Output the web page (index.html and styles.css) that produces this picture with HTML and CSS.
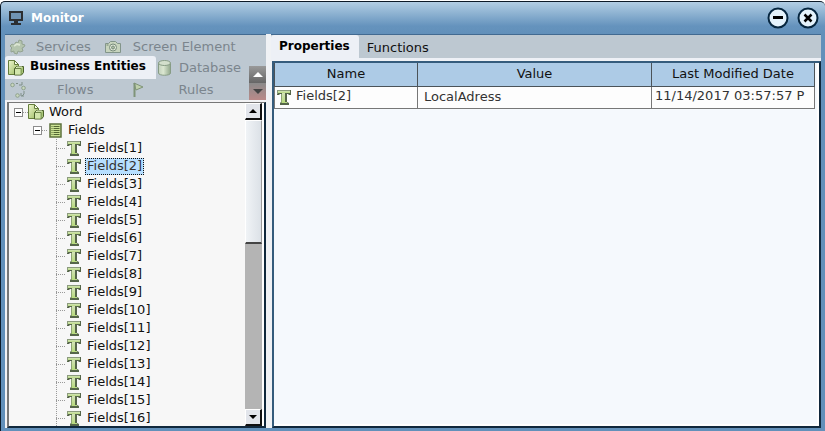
FILE: index.html
```html
<!DOCTYPE html>
<html lang="en">
<head>
<meta charset="utf-8">
<title>Monitor</title>
<link rel="stylesheet" href="styles.css">
</head>
<body>
<svg class="sprite" aria-hidden="true">
  <defs>
    <linearGradient id="green" x1="0" y1="0" x2="1" y2="1"><stop offset="0" stop-color="#f0f8cf"/><stop offset="1" stop-color="#96b85c"/></linearGradient>
    <linearGradient id="stem" x1="0" y1="0" x2="0" y2="1"><stop offset="0" stop-color="#d3e2b8"/><stop offset="1" stop-color="#b9db80"/></linearGradient>
    <linearGradient id="can" x1="0" y1="0" x2="1" y2="0"><stop offset="0" stop-color="#c2d0bc"/><stop offset=".4" stop-color="#dbe7d1"/><stop offset="1" stop-color="#91a78b"/></linearGradient>
  </defs>
  <symbol id="type" viewBox="0 0 16 16">
    <path d="M1 1h14v5h-2l-1-1h-1v8l2 1v2H4v-2l1-1V5H4L3 6H1z" fill="#56664a"/>
    <path d="M1 1h13v1H1zM1 2h1v3H1z" fill="#8b9b7c"/>
    <path d="M2 2h12v2H2z" fill="url(#stem)"/>
    <path d="M6 4h3v9H6z" fill="url(#stem)"/>
    <path d="M5 14h6v-1H6z" fill="#b9db80"/>
    <path d="M5 5h1v8H5z" fill="#8ea475"/>
  </symbol>
  <symbol id="entity" viewBox="0 0 16 16">
    <path d="M.5.5h6l4 4v10H.5z" fill="url(#green)" stroke="#657d3c"/>
    <path d="M6.500.5v4h4z" fill="#fafded" stroke="#657d3c"/>
    <path d="M6.500 8.500l2-2h7v6l-2 2.500h-7z" fill="#a8c678" stroke="#4c612d"/>
    <path d="M7 8.500h6V15" fill="none" stroke="#6c8548"/>
    <path d="M7 9h5.500v5.500H7z" fill="#d2e6ac"/>
    <path d="M8 8l1-1h5" fill="none" stroke="#e3f0c9"/>
  </symbol>
  <symbol id="list" viewBox="0 0 13 15">
    <path d="M1 1h11v13H1z" fill="#cbe294" stroke="#5d713c" stroke-width="1.500"/>
    <path d="M2.500 3.500h1m1 0h6m-8 2h1m1 0h6m-8 2h1m1 0h6m-8 2h1m1 0h6m-8 2h1m1 0h6" stroke="#536734" fill="none"/>
  </symbol>
  <symbol id="gear" viewBox="0 0 16 16">
    <path d="M6 3l2 1 1-3 3 1v3l3 1-1 2-2 1 1 3-3 1-2-1-1 3-3-1v-2l-3 1v-3l1-1-2-2 2-2 2 1z" fill="#b4c4ae" stroke="#93a391"/>
    <path d="M4 7l3-2 3 1" fill="none" stroke="#dbe5d2" stroke-width="2"/>
  </symbol>
  <symbol id="camera" viewBox="0 0 16 14">
    <path d="M.5 3.500h3l2-2h5l2 2h3v9H.5z" fill="#c7d4bd" stroke="#82958a"/>
    <circle cx="8" cy="7.500" r="3.500" fill="#e2ead9" stroke="#778a7b"/><circle cx="8" cy="7.500" r="1.500" fill="#a9bba0" stroke="#778a7b"/>
    <path d="M1.500 5h2" stroke="#718572"/>
  </symbol>
  <symbol id="database" viewBox="0 0 13 16">
    <path d="M.5 3v10c0 3 12 3 12 0V3z" fill="url(#can)" stroke="#879c85"/>
    <ellipse cx="6.500" cy="3" rx="6" ry="2.500" fill="#d3dfcc" stroke="#879c85"/>
  </symbol>
  <symbol id="flow" viewBox="0 0 16 16">
    <g fill="#c9d7bd" stroke="#8ea18e"><circle cx="2.500" cy="3" r="1.800"/><circle cx="13.500" cy="6" r="1.800"/><circle cx="7.500" cy="13.500" r="1.800"/></g>
    <path d="M6 1.500h2M9 3h3V0M14 9v3M14 12l-2 2M11 11v3h3" fill="none" stroke="#7e8f88"/>
  </symbol>
  <symbol id="flag" viewBox="0 0 11 15">
    <path d="M1 1l9 4-7 3z" fill="#bfd0ac" stroke="#7f9478"/><path d="M1.500 1v14" stroke="#7f9478" stroke-width="2"/>
  </symbol>
</svg>

<main class="window">
  <header class="titlebar">
    <svg class="monitor-icon" viewBox="0 0 14 14" aria-hidden="true"><path d="M1 1h12v8H1z" fill="#6f93b3" stroke="#2b2e32" stroke-width="2"/><path d="M1 8h12v2H9v2h3v2H2v-2h3v-2H1z" fill="#2b2e32"/></svg>
    <h1 class="title">Monitor</h1>
    <button class="round" aria-label="Minimize"><svg viewBox="0 0 22 22"><circle cx="11" cy="11" r="9.500"/><path d="M6 10.500h10" stroke-width="3"/></svg></button>
    <button class="round" aria-label="Close"><svg viewBox="0 0 22 22"><circle cx="11" cy="11" r="9.500"/><path d="M7.500 7.500l7 7m0-7l-7 7" stroke-width="2.500"/></svg></button>
  </header>

  <div class="body">
    <section class="side">
      <div class="side-tabs">
        <nav class="tab-rows">
          <div class="tab-row">
            <button class="tab"><svg class="i16"><use href="#gear"/></svg><span>Services</span></button>
            <button class="tab camera"><svg class="i16"><use href="#camera"/></svg><span>Screen Element</span></button>
          </div>
          <div class="tab-row">
            <button class="tab active"><svg class="i16"><use href="#entity"/></svg><span>Business Entities</span></button>
            <button class="tab database"><svg class="i13"><use href="#database"/></svg><span>Database</span></button>
          </div>
          <div class="tab-row">
            <button class="tab flows"><svg class="i16"><use href="#flow"/></svg><span>Flows</span></button>
            <button class="tab rules"><svg class="i11"><use href="#flag"/></svg><span>Rules</span></button>
          </div>
        </nav>
        <div class="spinner">
          <button class="spin up" aria-label="Previous tabs"><svg viewBox="0 0 10 5"><path d="M5 0l5 5H0z"/></svg></button>
          <button class="spin down" aria-label="Next tabs"><svg viewBox="0 0 10 5"><path d="M0 0h10L5 5z"/></svg></button>
        </div>
      </div>

      <div class="tree-box">
        <ul class="tree">
          <li class="node"><button class="toggle" aria-label="Collapse Word"></button><i class="dots"></i><svg class="i16"><use href="#entity"/></svg><span class="label">Word</span></li>
          <li class="node level2"><button class="toggle" aria-label="Collapse Fields"></button><i class="dots"></i><svg class="list-icon"><use href="#list"/></svg><span class="label">Fields</span></li>
          <li class="node leaf"><svg class="i16"><use href="#type"/></svg><span class="label">Fields[1]</span></li>
          <li class="node leaf"><svg class="i16"><use href="#type"/></svg><span class="label selected">Fields[2]</span></li>
          <li class="node leaf"><svg class="i16"><use href="#type"/></svg><span class="label">Fields[3]</span></li>
          <li class="node leaf"><svg class="i16"><use href="#type"/></svg><span class="label">Fields[4]</span></li>
          <li class="node leaf"><svg class="i16"><use href="#type"/></svg><span class="label">Fields[5]</span></li>
          <li class="node leaf"><svg class="i16"><use href="#type"/></svg><span class="label">Fields[6]</span></li>
          <li class="node leaf"><svg class="i16"><use href="#type"/></svg><span class="label">Fields[7]</span></li>
          <li class="node leaf"><svg class="i16"><use href="#type"/></svg><span class="label">Fields[8]</span></li>
          <li class="node leaf"><svg class="i16"><use href="#type"/></svg><span class="label">Fields[9]</span></li>
          <li class="node leaf"><svg class="i16"><use href="#type"/></svg><span class="label">Fields[10]</span></li>
          <li class="node leaf"><svg class="i16"><use href="#type"/></svg><span class="label">Fields[11]</span></li>
          <li class="node leaf"><svg class="i16"><use href="#type"/></svg><span class="label">Fields[12]</span></li>
          <li class="node leaf"><svg class="i16"><use href="#type"/></svg><span class="label">Fields[13]</span></li>
          <li class="node leaf"><svg class="i16"><use href="#type"/></svg><span class="label">Fields[14]</span></li>
          <li class="node leaf"><svg class="i16"><use href="#type"/></svg><span class="label">Fields[15]</span></li>
          <li class="node leaf"><svg class="i16"><use href="#type"/></svg><span class="label">Fields[16]</span></li>
        </ul>
        <div class="scrollbar">
          <button class="scroll-btn" aria-label="Scroll up"><svg viewBox="0 0 8 4"><path d="M4 0l4 4H0z"/></svg></button>
          <div class="track"><div class="thumb"></div></div>
          <button class="scroll-btn" aria-label="Scroll down"><svg viewBox="0 0 8 4"><path d="M0 0h8L4 4z"/></svg></button>
        </div>
      </div>
    </section>

    <section class="detail">
      <nav class="detail-tabs">
        <button class="dtab current">Properties</button>
        <button class="dtab">Functions</button>
      </nav>
      <div class="grid-box">
        <table class="grid">
          <colgroup><col class="c-name"><col class="c-value"><col class="c-date"></colgroup>
          <thead><tr><th>Name</th><th>Value</th><th>Last Modified Date</th></tr></thead>
          <tbody><tr><td class="name"><div class="cell"><svg class="i16"><use href="#type"/></svg><span>Fields[2]</span></div></td><td>LocalAdress</td><td class="date">11/14/2017 03:57:57 P</td></tr></tbody>
        </table>
      </div>
    </section>
  </div>
</main>
</body>
</html>
```
FILE: styles.css
```css
* { box-sizing: border-box; }

body {
  margin: 0;
  background: #fff;
  color: #111;
  font: 13px/18px "DejaVu Sans", Verdana, sans-serif;
}

button {
  margin: 0;
  padding: 0;
  border: 0;
  background: none;
  color: inherit;
  font: inherit;
}

svg { display: block; flex: none; }
.sprite { position: absolute; width: 0; height: 0; }
.i16 { width: 16px; height: 16px; }
.i13 { width: 13px; height: 16px; }
.i11 { width: 11px; height: 15px; }

.window {
  display: flex;
  flex-direction: column;
  height: 100vh;
  padding: 1px 0 0;
}

.titlebar {
  display: flex;
  flex: none;
  align-items: center;
  gap: 8px;
  height: 33px;
  padding: 0 6px 0 8px;
  border: solid #0c1a28;
  border-width: 1px 0 0 1px;
  border-radius: 5px 5px 0 0;
  background: linear-gradient(#b2cee4, #6593bd 75%, #6290ba);
}

.monitor-icon { width: 14px; height: 14px; }

.title {
  flex: 1;
  margin: 0;
  color: #fff;
  font-size: 12px;
  line-height: 18px;
}

.round { width: 22px; height: 22px; }
.round svg { width: 22px; height: 22px; }
.round circle { fill: #e5f3fc; stroke: #06263f; stroke-width: 2; }
.round path { stroke: #000; }

.body {
  display: flex;
  flex: 1;
  min-height: 0;
  padding: 0 4px 3px;
  border-left: 1px solid #0c1a28;
  background: #6290ba;
}

.side {
  display: flex;
  flex: none;
  flex-direction: column;
  width: 261px;
  background: #f3f3f5;
}

.side-tabs {
  display: flex;
  flex: none;
  align-items: flex-end;
  border-top: 1px solid #426a91;
  background: #bdc8d1;
}

.tab-rows { flex: 1; }
.tab-row { display: flex; height: 21px; align-items: center; }
.tab-row:nth-child(1) { padding-top: 3px; }
.tab-row:nth-child(2) { height: 23px; }

.tab {
  display: flex;
  align-items: center;
  height: 100%;
  padding-left: 5px;
  gap: 10px;
  color: #7b858d;
  white-space: nowrap;
}

.tab.camera { padding-left: 14px; gap: 12px; }
.tab.database { padding-left: 2px; gap: 8px; }
.tab.flows { gap: 31px; }
.tab.rules { padding-left: 40px; gap: 34px; }

.tab.active {
  width: 151px;
  padding-left: 3px;
  gap: 6px;
  border-radius: 3px 3px 0 0;
  background: #edf0f6;
  color: #000;
  font-size: 12px;
  font-weight: bold;
}

.tab.active span { padding-bottom: 3px; }

.spinner { display: flex; flex-direction: column; width: 17px; }
.spin { display: grid; place-items: center; height: 17px; }
.spin svg { width: 10px; height: 5px; }
.up { background: linear-gradient(#999, #666); fill: #fff; }
.down { background: linear-gradient(#8a8a8a, #ba8a89); fill: #444; }

.tree-box {
  display: flex;
  flex: 1;
  min-height: 0;
  margin: 2px 0 0 2px;
  border-style: solid;
  border-width: 1px 2px 2px;
  border-color: #777 #10283c #10283c #777;
  background: #f7f7f7;
}

.tree {
  flex: 1;
  margin: 0;
  padding: 0;
  overflow: hidden;
  list-style: none;
}

.node { display: flex; align-items: center; height: 18px; padding-left: 5px; }
.level2 { padding-left: 24px; }
.leaf { padding-left: 57px; }

.toggle {
  display: grid;
  place-items: center;
  width: 9px;
  height: 9px;
  border: 1px solid #8c8c8c;
  background: #fff;
}

.toggle::before { content: ""; width: 5px; height: 1px; background: #000; }
.dots { width: 5px; border-top: 1px dotted #999; }
.list-icon { width: 13px; height: 15px; margin: 0 1px 0 2px; }

.leaf {
  background:
    repeating-linear-gradient(#999 0 1px, transparent 1px 2px) 47px 0 / 1px 100% no-repeat,
    repeating-linear-gradient(90deg, #999 0 1px, transparent 1px 2px) 47px 9px / 10px 1px no-repeat;
}

.label { height: 17px; margin-left: 3px; padding: 0 1px; border: 1px solid transparent; line-height: 14px; }
.selected { border: 1px dotted #111; background: #b7dfff; color: #333; }

.scrollbar { display: flex; flex: none; flex-direction: column; width: 19px; border-right: 2px solid #fff; background: #b4b4b4; }

.scroll-btn {
  display: grid;
  flex: none;
  place-items: center;
  height: 17px;
  border: solid;
  border-width: 1px 2px 2px 1px;
  border-color: #fff #111 #111 #fff;
  background: #e2e5eb;
}

.scroll-btn svg { width: 8px; height: 4px; }
.track { flex: 1; }
.thumb { height: 43%; border: solid; border-width: 1px 1px 2px; border-color: #fff #999 #444 #fff; background: linear-gradient(90deg, #f0f3f6, #dce1e7); }

.detail {
  display: flex;
  flex: 1;
  flex-direction: column;
  min-width: 0;
  padding-left: 5px;
  background: #f0f2f5;
}

.detail-tabs {
  display: flex;
  flex: none;
  height: 26px;
  border-top: 1px solid #426a91;
  border-bottom: 2px solid #edf0f6;
  background: #bdc8d1;
}

.dtab { padding: 3px 8px 0; }

.current {
  margin-bottom: -2px;
  padding: 0 9px 4px 8px;
  border-radius: 3px 3px 0 0;
  background: #edf0f6;
  color: #000;
  font-size: 12px;
  font-weight: bold;
}

.grid-box {
  flex: 1;
  margin: 1px 0 0 1px;
  padding: 0 4px 0 0;
  border-style: solid;
  border-width: 2px;
  border-color: #355c7c #10283c #10283c #355c7c;
  background: #f5f9fd;
  box-shadow: inset -2px -2px #fff;
}

.grid { width: 100%; border-collapse: collapse; table-layout: fixed; }
.c-name { width: 143px; }
.c-date { width: 163px; }

th {
  height: 23px;
  padding: 0;
  border: solid #4b5358;
  border-width: 0 1px 1px;
  background: #adcbe6;
  font-weight: normal;
}

td {
  height: 22px;
  padding: 0 6px;
  border: solid #777;
  border-width: 0 1px 1px;
  background: #fdfdfd;
  color: #333;
  white-space: nowrap;
}

td.name { padding: 0 1px; }
td.date { padding: 0 3px 2px; }
.cell { display: flex; align-items: center; gap: 4px; }
.cell span { padding-bottom: 2px; }
```
